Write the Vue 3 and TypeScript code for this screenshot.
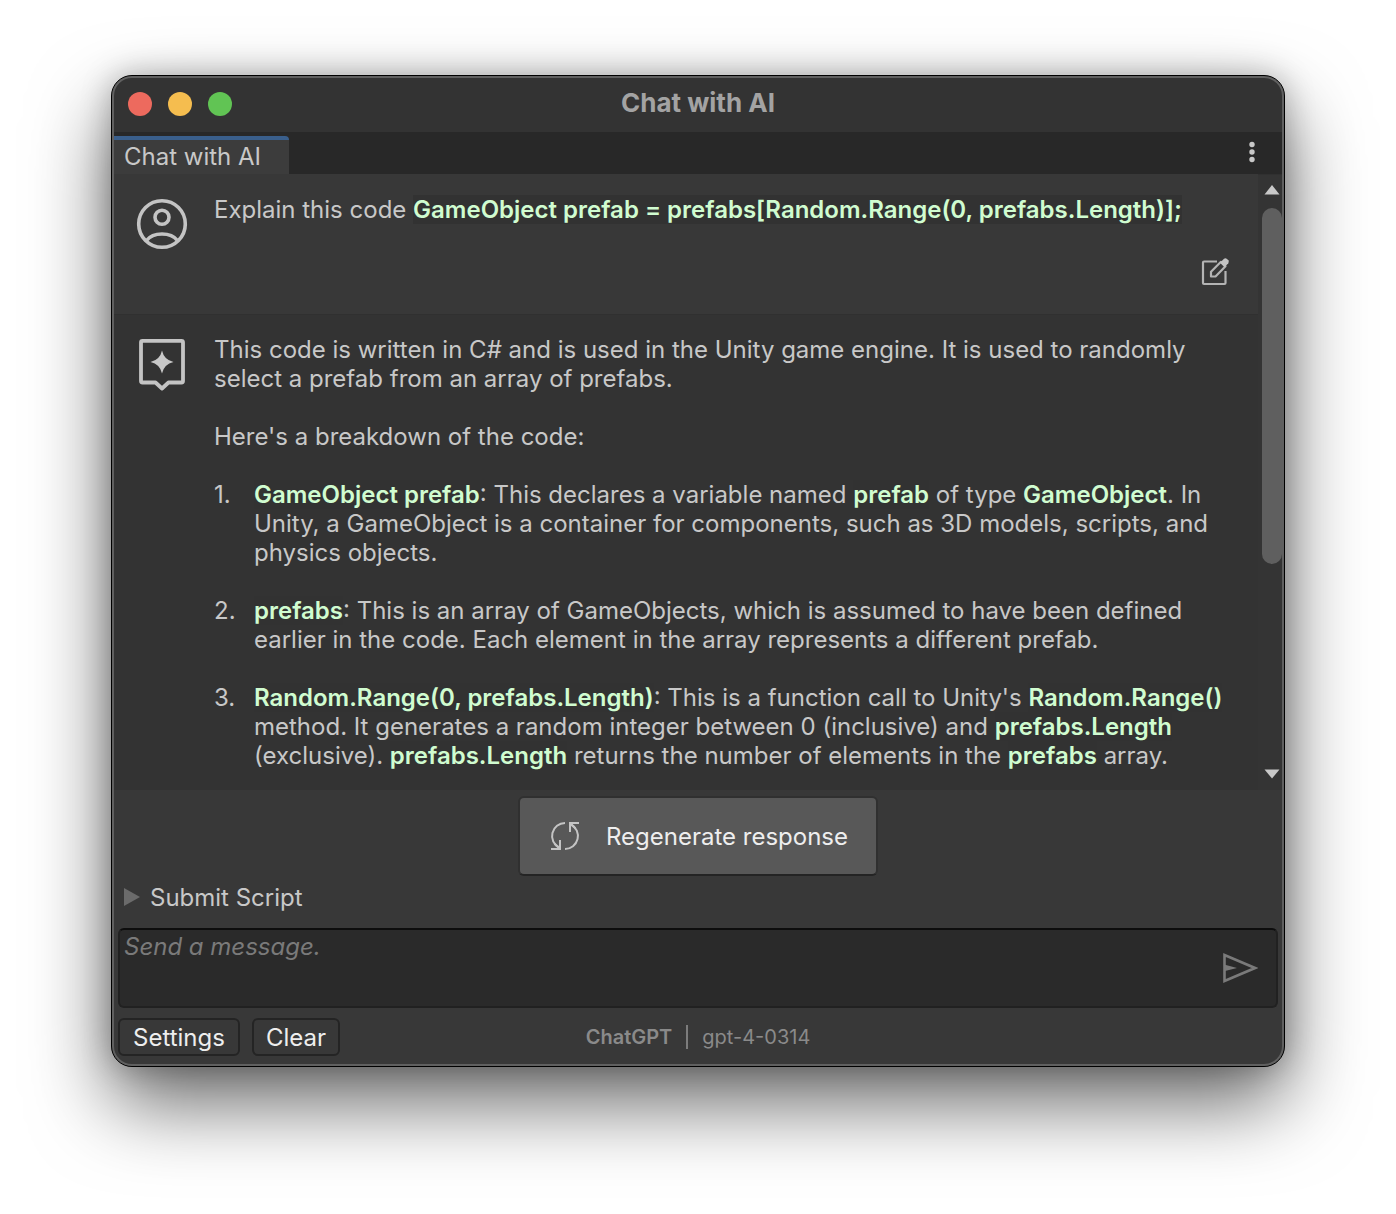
<script setup lang="ts">
import { ref } from 'vue'

interface Segment {
  text: string
  code?: boolean
}
type Line = Segment[]

const t = (text: string): Segment => ({ text })
const c = (text: string): Segment => ({ text, code: true })

const question: Line = [
  t('Explain this code '),
  c('GameObject prefab = prefabs[Random.Range(0, prefabs.Length)];'),
]

const intro: Line[][] = [
  [
    [t('This code is written in C# and is used in the Unity game engine. It is used to randomly')],
    [t('select a prefab from an array of prefabs.')],
  ],
  [[t("Here's a breakdown of the code:")]],
]

const steps: Line[][] = [
  [
    [c('GameObject prefab'), t(': This declares a variable named '), c('prefab'), t(' of type '), c('GameObject'), t('. In')],
    [t('Unity, a GameObject is a container for components, such as 3D models, scripts, and')],
    [t('physics objects.')],
  ],
  [
    [c('prefabs'), t(': This is an array of GameObjects, which is assumed to have been defined')],
    [t('earlier in the code. Each element in the array represents a different prefab.')],
  ],
  [
    [c('Random.Range(0, prefabs.Length)'), t(": This is a function call to Unity's "), c('Random.Range()')],
    [t('method. It generates a random integer between 0 (inclusive) and '), c('prefabs.Length')],
    [t('(exclusive). '), c('prefabs.Length'), t(' returns the number of elements in the '), c('prefabs'), t(' array.')],
  ],
]

const message = ref('')
const scriptOpen = ref(false)
</script>

<template>
  <main class="window">
    <header class="titlebar">
      <div class="lights">
        <button class="light red" aria-label="Close"></button>
        <button class="light yellow" aria-label="Minimize"></button>
        <button class="light green" aria-label="Zoom"></button>
      </div>
      <h1>Chat with AI</h1>
    </header>

    <nav class="tabbar">
      <button class="tab">Chat with AI</button>
      <button class="kebab" aria-label="Tab menu">
        <svg width="6" height="22" viewBox="0 0 6 22" fill="#c8c8c8">
          <circle cx="3" cy="3.500" r="2.700" /><circle cx="3" cy="11" r="2.700" /><circle cx="3" cy="18.500" r="2.700" />
        </svg>
      </button>
    </nav>

    <section class="conversation">
      <div class="messages">
        <article class="message user">
          <svg class="avatar" width="52" height="52" viewBox="0 0 52 52" fill="none" stroke="#c4c4c4" stroke-width="3.600">
            <circle cx="26" cy="26" r="23.300" />
            <circle cx="26" cy="19.300" r="7" />
            <path d="M10.500 42.500C14 38 19.500 36 26 36s12 2 15.500 6.500" />
          </svg>
          <div class="body">
            <p>
              <template v-for="(s, i) in question" :key="i"><code v-if="s.code">{{ s.text }}</code><span v-else>{{ s.text }}</span></template>
            </p>
            <button class="edit" aria-label="Edit message">
              <svg width="30" height="30" viewBox="0 0 30 30" fill="none" stroke="#b4b4b4" stroke-width="2.200" stroke-linejoin="round">
                <path d="M17 4.500H4Q3 4.500 3 5.500V26Q3 27 4 27H24.500Q25.500 27 25.500 26V14" />
                <path d="M11 19.500V14.800L21 4.800L25.500 9.300L15.500 19.500Z" />
                <path d="M20 5.800L24 1.800Q25.500 .8 27 2L28.300 3.300Q29.300 4.800 28.300 6.300L24.500 10.200Z" fill="#c4c4c4" stroke="none" />
              </svg>
            </button>
          </div>
        </article>

        <article class="message reply">
          <svg class="avatar" width="52" height="56" viewBox="0 0 52 56">
            <path d="M6.500 2.800H45.500Q47 2.800 47 4.300V43Q47 44.500 45.500 44.500H32.500L26 50.500L19.500 44.500H6.500Q5 44.500 5 43V4.300Q5 2.800 6.500 2.800Z" fill="none" stroke="#c4c4c4" stroke-width="3.800" stroke-linejoin="round" />
            <path d="M26 12.500Q28 21.800 37.500 24Q28 26.200 26 35.500Q24 26.200 14.500 24Q24 21.800 26 12.500Z" fill="#c8c8c8" />
          </svg>
          <div class="body">
            <p v-for="(para, p) in intro" :key="p">
              <template v-for="(line, l) in para" :key="l"><br v-if="l"><span v-for="(s, i) in line" :key="i">{{ s.text }}</span></template>
            </p>
            <ol>
              <li v-for="(step, n) in steps" :key="n">
                <span class="num">{{ n + 1 }}.</span>
                <p>
                  <template v-for="(line, l) in step" :key="l"><br v-if="l"><template v-for="(s, i) in line" :key="i"><code v-if="s.code">{{ s.text }}</code><span v-else>{{ s.text }}</span></template></template>
                </p>
              </li>
            </ol>
          </div>
        </article>
      </div>

      <div class="scroller">
        <button aria-label="Scroll up">
          <svg width="16" height="10" viewBox="0 0 16 10"><path d="M8 0L15.500 9.500H.5Z" fill="#c8c8c8" /></svg>
        </button>
        <div class="track"><div class="thumb"></div></div>
        <button aria-label="Scroll down">
          <svg width="16" height="10" viewBox="0 0 16 10"><path d="M8 9.500L15.500 .5H.5Z" fill="#c8c8c8" /></svg>
        </button>
      </div>
    </section>

    <section class="composer">
      <button class="regenerate">
        <svg width="30" height="30" viewBox="0 0 30 30" fill="none" stroke="#c4c4c4" stroke-width="2">
          <path d="M15 2A13 13 0 0 0 9 26.500" />
          <path d="M1 28H10V19" />
          <path d="M10 28L4.500 22.500" />
          <path d="M15 28A13 13 0 0 0 21 3.500" />
          <path d="M29 2H20V11" />
          <path d="M20 2L25.500 7.500" />
        </svg>
        <span>Regenerate response</span>
      </button>

      <button class="foldout" :aria-expanded="scriptOpen" @click="scriptOpen = !scriptOpen">
        <svg width="16" height="18" viewBox="0 0 16 18"><path d="M0 0L16 9L0 18Z" fill="#6b6b6b" /></svg>
        <span>Submit Script</span>
      </button>

      <div class="field">
        <textarea v-model="message" aria-label="Message" placeholder="Send a message."></textarea>
        <button class="send" aria-label="Send">
          <svg width="36" height="32" viewBox="0 0 36 32" fill="none" stroke="#7a7a7a" stroke-width="2.600">
            <path d="M2.500 3V29L33 16Z" />
            <path d="M3 12.800L15 16L3 19Z" fill="#7a7a7a" stroke="none" />
          </svg>
        </button>
      </div>
    </section>

    <footer class="footer">
      <div class="actions">
        <button class="settings">Settings</button>
        <button>Clear</button>
      </div>
      <div class="model">
        <strong>ChatGPT</strong>
        <span class="bar"></span>
        <span>gpt-4-0314</span>
      </div>
    </footer>
  </main>
</template>

<style>
body {
  margin: 0;
  background: #fff;
}
</style>

<style scoped>
.window {
  position: relative;
  box-sizing: border-box;
  margin: 75px 111px 147px;
  border: 1px solid #000;
  border-radius: 21px;
  overflow: hidden;
  background: #383838;
  color: #c8c8c8;
  font: 24px/29px Inter, "Liberation Sans", sans-serif;
  box-shadow: 0 36px 80px rgba(0, 0, 0, 0.6), 0 0 30px rgba(0, 0, 0, 0.25);
}
.window::after {
  content: "";
  position: absolute;
  inset: 0;
  border: 2px solid #606060;
  border-radius: 20px;
  pointer-events: none;
}
button {
  margin: 0;
  padding: 0;
  border: 0;
  background: none;
  color: inherit;
  font: inherit;
}
svg {
  display: block;
  flex: none;
}
p,
ol,
h1 {
  margin: 0;
  padding: 0;
}
.titlebar {
  display: grid;
  grid-template-columns: 1fr auto 1fr;
  align-items: center;
  height: 56px;
  padding: 0 16px;
  background: #333;
}
.lights {
  display: flex;
  gap: 16px;
}
.light {
  width: 24px;
  height: 24px;
  border-radius: 50%;
}
.red {
  background: #ed6a5e;
}
.yellow {
  background: #f5bd4f;
}
.green {
  background: #61c454;
}
h1 {
  padding-bottom: 2px;
  color: #a3a3a3;
  font-size: 26px;
  font-weight: 700;
  line-height: 32px;
}
.tabbar {
  display: flex;
  justify-content: space-between;
  align-items: flex-end;
  box-sizing: border-box;
  height: 42px;
  background: #282828;
}
.tab {
  box-sizing: border-box;
  width: 177px;
  height: 38px;
  padding: 0 12px 2px;
  border-top: 4px solid #3a5f8c;
  border-radius: 2px 4px 0 0;
  background: #3c3c3c;
  text-align: left;
}
.kebab {
  display: flex;
  justify-content: center;
  align-items: center;
  width: 64px;
  height: 42px;
  padding-bottom: 2px;
}
.conversation {
  display: flex;
}
.messages {
  flex: 1;
  min-width: 0;
}
.message {
  display: flex;
  gap: 26px;
  padding: 21px 24px 20px;
}
.message .avatar {
  margin-top: 3px;
}
.user {
  height: 99px;
}
.reply {
  background: #333;
}
.reply,
.scroller {
  box-shadow: inset 0 1px #303030;
}
.body {
  display: flex;
  flex-direction: column;
  flex: 1;
  gap: 29px;
  min-width: 0;
  white-space: nowrap;
}
code {
  background: #323232;
  color: #d0fcd0;
  font-family: inherit;
  font-weight: 600;
}
.edit {
  align-self: flex-end;
  margin-right: 2px;
  padding: 4px 2px;
}
ol {
  display: flex;
  flex-direction: column;
  gap: 29px;
  list-style: none;
}
li {
  display: flex;
}
.num {
  width: 40px;
}
.scroller {
  display: flex;
  flex-direction: column;
  align-items: center;
  box-sizing: border-box;
  width: 26px;
  padding: 11px 2px 11px 4px;
  background: #343434;
}
.track {
  flex: 1;
  width: 20px;
  padding: 13px 0;
}
.thumb {
  height: 65%;
  border-radius: 10px;
  background: #5f5f5f;
}
.composer {
  display: flex;
  flex-direction: column;
  padding: 6px 6px 0;
}
.regenerate {
  display: flex;
  align-self: center;
  align-items: center;
  gap: 26px;
  box-sizing: border-box;
  height: 80px;
  padding: 0 28px 0 30px;
  border: 2px solid #303030;
  border-bottom-color: #242424;
  border-radius: 6px;
  background: #585858;
  color: #eee;
}
.foldout {
  display: flex;
  align-self: flex-start;
  align-items: center;
  gap: 10px;
  height: 42px;
  padding-left: 6px;
}
.field {
  display: flex;
  align-items: center;
  box-sizing: border-box;
  height: 80px;
  margin-top: 10px;
  border: 2px solid #212121;
  border-top-color: #0d0d0d;
  border-radius: 6px;
  background: #2a2a2a;
}
textarea {
  flex: 1;
  box-sizing: border-box;
  height: 76px;
  padding: 2px 4px;
  border: 0;
  outline: 0;
  resize: none;
  background: none;
  color: #d2d2d2;
  font: inherit;
}
textarea::placeholder {
  color: #7a7a7a;
  font-style: italic;
  opacity: 1;
}
.send {
  padding: 0 18px;
}
.footer {
  display: grid;
  grid-template-columns: 1fr auto 1fr;
  align-items: center;
  padding: 10px 6px;
}
.actions {
  display: flex;
  gap: 12px;
}
.actions button {
  box-sizing: border-box;
  height: 38px;
  padding: 0 12px;
  border: 2px solid #242424;
  border-radius: 6px;
  color: #eee;
}
.actions .settings {
  min-width: 122px;
}
.model {
  display: flex;
  align-items: center;
  gap: 14px;
  color: #8a8a8a;
  font-size: 20px;
  line-height: 24px;
}
.model strong {
  font-weight: 600;
}
.bar {
  width: 2px;
  height: 24px;
  background: #7c7c7c;
}
</style>
